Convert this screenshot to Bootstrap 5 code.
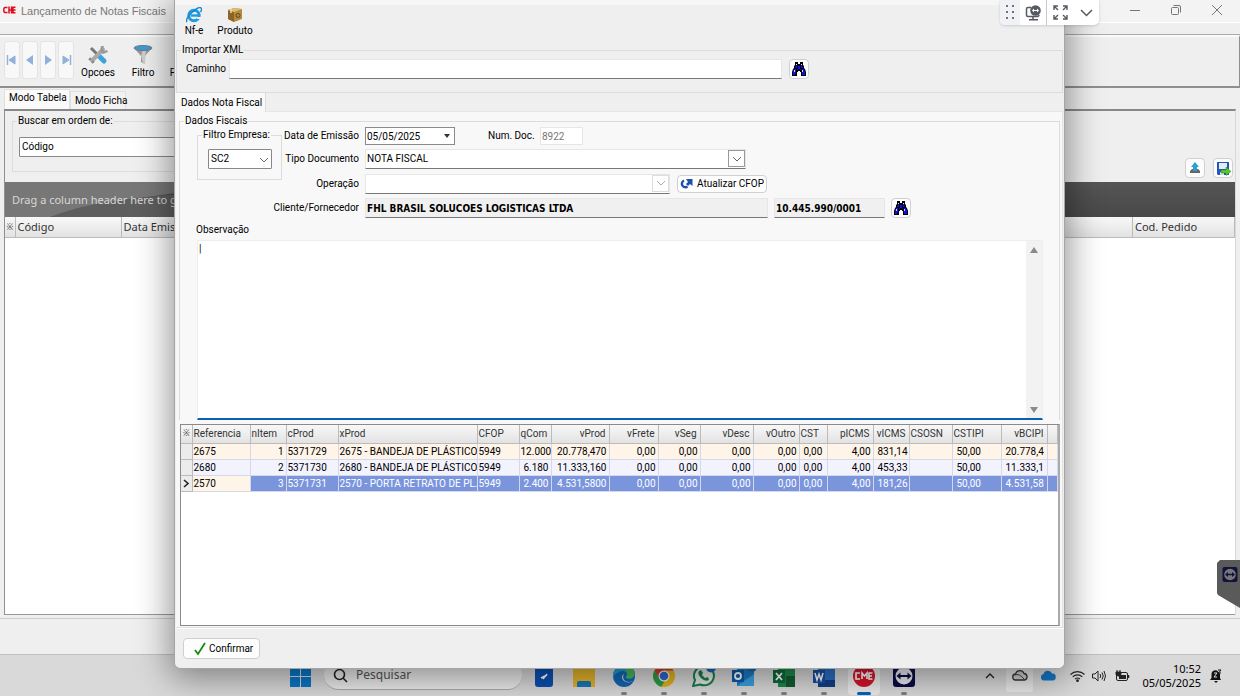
<!DOCTYPE html>
<html lang="pt-BR">
<head>
<meta charset="utf-8">
<meta name="viewport" content="width=device-width, initial-scale=1">
<title>Lançamento de Notas Fiscais</title>
<link href="https://cdn.jsdelivr.net/npm/bootstrap@5.3.0/dist/css/bootstrap.min.css" rel="stylesheet">
<style>
:root{--seg:"Noto Sans","Open Sans",sans-serif;--face:#efefef;--pane:#f8f8f8;--line:#dcdcdc}
body{font:10px/14px Roboto,"Noto Sans",sans-serif;color:#000;height:100vh;overflow:hidden;background:var(--face)}
button,input,select,textarea{font:inherit;color:inherit}
svg{display:block;flex:none}
.desk{height:100%}
/* window behind */
.titlebar{height:22px;background:#f3f3f3;color:#777;font:11px/22px "Liberation Sans",sans-serif}
.menustrip{height:13px;border-bottom:1px solid #aaa;border-top:1px solid #fff}
.toolbar-main{height:53px;border:solid #8f8f8f;border-width:0 1px 2px 0;border-top:2px solid #fafafa;padding:4px 0 0 4px}
.navbtn{width:16px;height:38px;border:1px solid #e4e4e4;border-radius:3px;background:#f8f8f8;padding:0}
.tool{border:0;background:none;padding:0;width:40px;text-align:center;display:flex;flex-direction:column;align-items:center}
.tool svg{margin:4px auto 1px}
.tabrow{height:20px;margin-top:1px}
.tabx{border:1px solid #e0e0e0;border-bottom:0;background:#f2f2f2;padding:1px 4px 0;color:#000}
.tabx.on{background:#fafafa;padding:0 4px 3px}
.panel-main{border-left:1px solid #909090;border-right:1px solid #d8d8d8;border-top:2px solid #888;margin:0 4px;min-height:0}
.grp{border:1px solid var(--line);margin:0;padding:0;min-width:0}
.grp>legend{float:none;width:auto;font:inherit;margin:0 0 0 4px;padding:0 1px;line-height:14px}
.searchzone{height:71px;padding:3px 0 0 7px}
.box{border:1px solid #8a8a8a;background:#fff;height:20px;padding:0 1px;border-radius:0}
.dragband{height:35px;background:linear-gradient(#555,#484848);color:#d8d8d8;font:11px/36px var(--seg);overflow:hidden;padding-left:7px}
.dragband svg{left:0;top:0}
.gridx{width:100%;table-layout:fixed;border-collapse:collapse;margin:0}
.gridx th,.gridx td{overflow:hidden;white-space:nowrap;font-weight:400}
.gridx thead th{background:linear-gradient(#f8f8f8,#e2e2e2);color:#333;border-right:1px solid #bbb;border-bottom:1px solid #bbb}
.back-table th{height:20px;font:11px/18px var(--seg);padding:0 2px}
.gridx th.mark-col{padding:0;text-align:center;font-size:8px}
.status{height:36px;border-top:1px solid #ccc;margin-top:3px}
.mini{width:20px;height:20px;background:#fdfdfd;border:1px solid #d0d0d0;border-radius:4px;padding:0;display:flex;align-items:center;justify-content:center}
/* taskbar */
.taskbar{height:42px;background:#d9d9d9;border-top:1px solid #c0c0c0;font-family:var(--seg)}
.starter{margin-left:290px;margin-right:13px;border:0;background:none;padding:0}
.seek{width:198px;height:29px;border-radius:15px;background:#ececec;border-bottom:1px solid #aaa;padding:0 9px}
.seek input{border:0;background:none;outline:0;width:120px;font-size:12px;color:#555;padding:0}
.seek input::placeholder{color:#555;opacity:1}
.app{width:40px;height:38px;border:0;background:none;padding:0;display:flex;flex-direction:column;align-items:center;justify-content:flex-end;gap:5px}
.app::after{content:"";width:6px;height:3px;border-radius:2px;background:#808080}
.app.idle::after{background:none}
.app.cur{width:32px;margin:0 4px;background:#ececec;border-radius:4px}
.app.cur::after{width:14px;background:#0067c0}
.clock{font-size:11px;line-height:14px}
/* dialog */
.dlg{position:absolute;left:174px;right:175px;top:0;bottom:27px;background:var(--face);border:1px solid #a5a5a5;border-top:0;border-radius:0 0 6px 6px;box-shadow:0 5px 34px 4px rgba(0,0,0,.42);z-index:5;overflow:hidden}
.dlg-top{height:43px;border-top:5px solid #f6f6f6}
.dlg-top .tool svg{margin:2px auto 1px}
.imp{height:50px;margin:0 1px}
.sel{appearance:none;background:#fff;border:1px solid #888;height:20px;padding:0 2px;width:64px;border-radius:1px}
.line{border:1px solid #e6e6e6;border-bottom:1px solid #777;background:#fff;height:20px;padding:0 1px;border-radius:0;min-width:0;outline:0}
.dtabs{height:19px;border-bottom:1px solid #e6e6e6}
.dtabs button{border:0;background:var(--pane);padding:0 6px;height:19px;width:91px;white-space:nowrap;border-right:1px solid #ddd;text-align:left}
.dpane{background:var(--pane);margin:0 1px;border:solid #e2e2e2;border-width:0 1px 1px 0;padding:2px 2px 1px 3px}
.formgrid{display:grid;grid-template-columns:85px 77px minmax(0,1fr);grid-template-rows:22px 24px 25px 24px;align-items:center;margin-left:17px;margin-top:-3px}
.formgrid>label{text-align:right;white-space:nowrap}
.formgrid>.fieldrow{display:flex;align-items:center;padding-left:6px}
.over{position:absolute;right:1px;top:1px;pointer-events:none}
.dd{width:17px;height:17px;border:1px solid #999;display:flex;align-items:center;justify-content:center}
.bold{font:700 10px/14px "DejaVu Sans Condensed","DejaVu Sans",sans-serif;background:#f0f0f0}
.obs{border:1px solid #eee;border-bottom:2px solid #0a5fb4;background:#fff;margin:3px 16px 0 17px;height:180px}
.obs textarea{border:0;resize:none;outline:0;padding:1px 1px;background:none;overflow:hidden}
.sbar{width:16px;background:#f2f2f2;display:flex;flex-direction:column;justify-content:space-between;align-items:center;padding:6px 0 5px}
.tri-u,.tri-d{border:4px solid transparent}
.tri-u{border-bottom:6px solid #8a8a8a;border-top:0}
.tri-d{border-top:6px solid #8a8a8a;border-bottom:0}
.items{background:#fff;border:1px solid #8a8a8a;border-right-width:2px;border-right-color:#aaa;margin:4px 0 0 1px;overflow:hidden}
.items th{height:18px;line-height:14px;padding:1px 3px 1px 1px}
.items td{height:16px;line-height:14px;padding:1px 2px 0 1px;border-right:1px solid #d3d9ea;border-bottom:1px solid #d3d9ea}
.items tbody tr:nth-child(odd){background:#fff4e8}
.items tbody tr:nth-child(even){background:#f3f3fe}
.items tbody tr.pick{background:#7b95dd;color:#fff}
.items tr.pick td:nth-child(2){background:#fff4e8;color:#000}
.items tr td:first-child{background:#ececec;border-color:#bbb;padding:0}
.r{text-align:right}
.foot{height:40px;border-top:1px solid #fff;padding:9px 8px 0}
.okbtn{width:77px;height:21px;border:1px solid #cfcfcf;border-radius:4px;background:#fdfdfd;padding:0 0 0 9px;display:flex;align-items:center;gap:2px}
/* remote session overlays */
.remote{position:absolute;left:1000px;top:0;width:99px;height:25px;background:#fff;border-radius:0 0 5px 5px;z-index:8;display:flex;overflow:hidden;box-shadow:0 1px 3px rgba(0,0,0,.15)}
.remote button{border:0;background:none;padding:0;display:flex;align-items:center;justify-content:center}
.sidehandle{position:absolute;right:0;top:560px;z-index:4}
</style>
</head>
<body>
<svg width="0" height="0" class="position-absolute">
<symbol id="bino" viewBox="0 0 16 16"><path d="M4 1h3v2h2V1h3v3l1 1v2l1 1 1 3v4h-5v-4H9v-1H7v1H6v4H1v-4l1-3 1-1V5l1-1z" fill="#000"/><path d="M5 3h1v4H4l1-2zM3 8h2v3l-1 3H2v-3zM10 3h1v2l1 2h-2zM11 8h2l1 3v3h-3zM7 5h2v3H7z" fill="#1212e8"/><path d="M3 12h1v2H2zM12 12h2v2h-2zM6 8h1v1H6zM9 8h1v1H9z" fill="#1212e8"/><path d="M3 9h1v2H3zM11 9h1v2h-1zM5 3h1v1H5zM10 3h1v1h-1z" fill="#dde"/></symbol>
<symbol id="chev" viewBox="0 0 10 6"><path d="M1 1l4 4 4-4" fill="none" stroke="currentColor"/></symbol>
</svg>
<div class="desk d-flex flex-column position-relative">
  <main class="flex-grow-1 d-flex flex-column" style="min-height:0">
    <header class="titlebar d-flex align-items-center">
      <svg width="13" height="8" viewBox="0 0 13 8" style="margin:0 5px 2px 3px"><path d="M4.500 1.500H2Q.8 1.500 .8 4T2 6.500h2.500M6 7.500V.5M8.500 7.500V.5M6 4h2.500M12.500 1.200H10v5.600h2.500M10 4h2.500" fill="none" stroke="#e00d1c" stroke-width="1.500"/></svg>
      <span>Lançamento de Notas Fiscais</span>
      <div class="ms-auto d-flex align-items-center" style="gap:31px;padding:0 18px 3px 0">
        <svg width="10" height="10"><path d="M0 5.500h10" stroke="#777"/></svg>
        <svg width="10" height="10" viewBox="0 0 10 10" fill="none" stroke="#777"><rect x=".5" y="2.500" width="7" height="7" rx="1"/><path d="M2.500 .5h5.500a1.500 1.500 0 0 1 1.500 1.500v5.500"/></svg>
        <svg width="10" height="10"><path d="M0 0l10 10M10 0L0 10" stroke="#777"/></svg>
      </div>
    </header>
    <div class="menustrip"></div>
    <div class="toolbar-main d-flex">
      <div class="d-flex" style="gap:2px">
        <button class="navbtn" aria-label="Primeiro"><svg width="14" height="12"><path d="M2.500 1v10" stroke="#8fb1dc" stroke-width="1.500"/><path d="M4 6l6-4v8z" fill="#8fb1dc" stroke="#8fb1dc"/></svg></button>
        <button class="navbtn" aria-label="Anterior"><svg width="14" height="12"><path d="M3 6l7-5v10z" fill="#8fb1dc"/></svg></button>
        <button class="navbtn" aria-label="Próximo"><svg width="14" height="12"><path d="M11 6L4 1v10z" fill="#8fb1dc"/></svg></button>
        <button class="navbtn" aria-label="Último"><svg width="14" height="12"><path d="M11.500 1v10" stroke="#8fb1dc" stroke-width="1.500"/><path d="M10 6L4 2v8z" fill="#8fb1dc" stroke="#8fb1dc"/></svg></button>
      </div>
      <button class="tool ms-1"><svg width="20" height="20" viewBox="0 0 20 20"><path d="M3 3l8 8" stroke="#777" stroke-width="3"/><path d="M11 11l5 5" stroke="#39a3dc" stroke-width="5" stroke-linecap="round"/><path d="M15 4.500L4 15.500" stroke="#a9a9a9" stroke-width="4" stroke-linecap="round"/><path d="M13 1l-1 5 3 3 5-2-1-2-3 1-1-2 1-3z" fill="#999"/><path d="M1 15l2-2M4 18l2-2" stroke="#888" stroke-width="2"/></svg>Opcoes</button>
      <button class="tool" style="margin-left:5px"><svg width="20" height="20" viewBox="0 0 20 20"><path d="M1 3l7 8v6l4 2v-8l7-8z" fill="#999"/><path d="M8 11l2-7h3l-1 15-2-1z" fill="#ccc"/><ellipse cx="10" cy="3" rx="9" ry="2.500" fill="#3c9cd6" stroke="#777"/></svg>Filtro</button>
      <button class="tool" style="margin-left:2px"><svg width="20" height="20"></svg>Fechar</button>
    </div>
    <div class="tabrow d-flex align-items-end ps-1" role="tablist">
      <button class="tabx on h-100 text-start text-nowrap" style="width:66px" role="tab">Modo Tabela</button>
      <button class="tabx text-start text-nowrap" style="height:18px;width:56px" role="tab">Modo Ficha</button>
    </div>
    <section class="panel-main flex-grow-1 d-flex flex-column">
      <div class="searchzone d-flex justify-content-between">
        <fieldset class="grp" style="width:420px;height:58px"><legend>Buscar em ordem de:</legend>
          <select class="sel d-block" style="width:300px;margin:9px 0 0 6px" aria-label="Buscar em ordem de"><option>Código</option></select></fieldset>
        <div class="d-flex align-items-end" style="gap:8px;padding:0 2px 4px 0">
          <button class="mini" aria-label="Importar"><svg width="12" height="12" viewBox="0 0 12 12"><path d="M1 9l2-2h6l2 2v2H1z" fill="#666"/><path d="M6 0L2 5h2v4h4V5h2z" fill="#2aa0d4"/></svg></button>
          <button class="mini" aria-label="Salvar"><svg width="15" height="15" viewBox="0 0 15 15"><path d="M1 1h12v13H2l-1-1z" fill="#2458b8"/><path d="M3 2h8v6H3z" fill="#e4ecf6"/><path d="M4 11h4v3H4z" fill="#dde"/><path d="M5 9h5V6l5 4.500-5 4V12H5z" fill="#58c832" stroke="#2b8a14" stroke-width=".5"/></svg></button>
        </div>
      </div>
      <div class="dragband position-relative"><svg class="position-absolute" width="300" height="35"><path d="M0 0h300C200 4 110 18 45 35H0z" fill="#777"/><path d="M45 35C90 18 130 13 300 5v30z" fill="#5e5e5e"/></svg><span class="position-relative">Drag a column header here to group by that column</span></div>
      <div class="flex-grow-1 bg-white" style="border-bottom:1px solid #999">
        <table class="gridx back-table"><colgroup><col style="width:10px"><col style="width:106px"><col><col style="width:102px"></colgroup><thead><tr><th class="mark-col">※</th><th>Código</th><th>Data Emissão</th><th>Cod. Pedido</th></tr></thead></table>
      </div>
    </section>
    <div class="status"></div>
  </main>

  <footer class="taskbar d-flex align-items-center">
    <button class="starter" aria-label="Iniciar"><svg width="21" height="22"><path d="M0 0h10v11H0zM11 0h10v11H11zM0 12h10v10H0zM11 12h10v10H11z" fill="#0a78c8"/></svg></button>
    <label class="seek d-flex align-items-center gap-2"><svg width="15" height="15" viewBox="0 0 15 15" fill="none" stroke="#222" stroke-width="1.600"><circle cx="6.500" cy="6.500" r="5"/><path d="M10 10l4 4"/></svg><input type="text" placeholder="Pesquisar" aria-label="Pesquisar"></label>
    <nav class="d-flex" style="margin-left:2px">
      <button class="app idle" aria-label="Assistente"><svg width="18" height="20"><rect width="18" height="20" rx="3" fill="#0b50b4"/><path d="M6 11l6-3M8 12l4-5" stroke="#fff" stroke-width="1.500"/></svg></button>
      <button class="app idle" aria-label="Arquivos"><svg width="22" height="20"><path d="M0 0h22v20H0z" fill="#e5b32c"/><path d="M4 20v-4q0-2 2-2h10q2 0 2 2v4z" fill="#1777b8"/></svg></button>
      <button class="app" aria-label="Edge"><svg width="22" height="22" viewBox="0 0 22 22"><circle cx="11" cy="11" r="11" fill="#1268b5"/><path d="M0 10C2-3 20-3 22 8c0 6-7 7-9 4 3-4-2-8-7-5Q1 9 0 13z" fill="#1c9fc9"/><path d="M12 0c8 0 11 7 9 11-3 4-8 3-8 1 3-3 1-9-6-9z" fill="#4cb75a"/><path d="M11 9c-3 5 2 10 9 7-4 3-11 1-11-4q0-2 2-3z" fill="#d0d9df"/></svg></button>
      <button class="app" aria-label="Chrome"><svg width="22" height="22" viewBox="0 0 22 22"><circle cx="11" cy="11" r="11" fill="#e2b21b"/><path d="M1.500 5.500A11 11 0 0 1 20.500 5.500H11L6 14z" fill="#d43a2c"/><path d="M1.500 5.500L6.500 14l5 2-3 5.700A11 11 0 0 1 1.500 5.500z" fill="#2a9c4a"/><circle cx="11" cy="11" r="5.500" fill="#eee"/><circle cx="11" cy="11" r="4.300" fill="#2b66c8"/></svg></button>
      <button class="app" aria-label="WhatsApp"><svg width="24" height="22" viewBox="0 0 24 22"><path d="M1 21l2-6A10 9.500 0 1 1 8 19.500z" fill="#dfe6e1" stroke="#1a7d4d" stroke-width="2"/><path d="M7 6q-2 3 2 7t8 2l-1-3-3 1-3-3 1-2-2-3z" fill="#1a7d4d"/><circle cx="19" cy="2.500" r="5" fill="#1768b4"/></svg></button>
      <button class="app" aria-label="Outlook"><svg width="24" height="22" viewBox="0 0 24 22"><path d="M5 2h17v19H5z" fill="#1b7ac8"/><path d="M5 21l17-12v12z" fill="#3aa2e0"/><rect y="5" width="12" height="12" fill="#0a5aa8"/><circle cx="6" cy="11" r="3" fill="none" stroke="#fff" stroke-width="1.800"/><circle cx="20" cy="2" r="5" fill="#1768b4"/></svg></button>
      <button class="app" aria-label="Excel"><svg width="22" height="21"><path d="M5 0h17v21H5z" fill="#1d8a4b"/><path d="M13 10h9v11h-9z" fill="#125c33"/><rect y="4" width="12" height="13" fill="#0d6a39"/><path d="M3 7l6 7M9 7l-6 7" stroke="#fff" stroke-width="1.800"/></svg></button>
      <button class="app" aria-label="Word"><svg width="22" height="21"><path d="M5 0h17v21H5z" fill="#2a6fc4"/><path d="M5 14h17v7H5z" fill="#133f8a"/><rect y="4" width="12" height="13" fill="#174fa4"/><path d="M2 7l2 7 2-6 2 6 2-7" fill="none" stroke="#fff" stroke-width="1.500"/></svg></button>
      <button class="app cur" aria-label="CME"><svg width="22" height="22" viewBox="0 0 22 22"><circle cx="11" cy="11" r="11" fill="#d6152a"/><path d="M7 8H3v6h4M9 14V8l2.500 3L14 8v6M19.500 8H16v6h3.500M16 11h3" fill="none" stroke="#fff" stroke-width="1.600"/></svg></button>
      <button class="app" aria-label="TeamViewer"><svg width="22" height="22" viewBox="0 0 22 22"><rect width="22" height="22" rx="3" fill="#0b0b48"/><circle cx="11" cy="11" r="8.500" fill="#e9e9ef"/><path d="M3.500 11l4-3.500V10h7V7.500l4 3.500-4 3.500V12h-7v2.500z" fill="#0b0b48"/></svg></button>
    </nav>
    <div class="ms-auto d-flex align-items-center" style="padding-right:18px">
      <svg width="10" height="6" viewBox="0 0 10 6" fill="none" stroke="#222" stroke-width="1.400"><path d="M1 5l4-4 4 4"/></svg>
      <span class="d-flex align-items-center justify-content-center" style="width:27px;height:32px;background:#e8e8e8;border-radius:3px;margin-left:11px"><svg width="16" height="11" viewBox="0 0 16 11"><path d="M4 10a3 3 0 0 1-.5-6 4.500 4.500 0 0 1 8.500-.5A3.300 3.300 0 0 1 12.500 10z" fill="#ccc" stroke="#333" stroke-width="1.300"/><path d="M3 5q4-2 9 4" stroke="#444" fill="none"/></svg></span>
      <svg width="16" height="11" viewBox="0 0 16 11" style="margin-left:7px"><path d="M4 10.500a3.300 3.300 0 0 1-.5-6.500 4.500 4.500 0 0 1 8.500-.5A3.500 3.500 0 0 1 12.500 10.500z" fill="#1478c8"/></svg>
      <svg width="15" height="12" viewBox="0 0 15 12" fill="none" stroke="#222" stroke-width="1.100" style="margin-left:14px"><path d="M.5 4.500a10 10 0 0 1 14 0M2.700 6.800a7 7 0 0 1 9.600 0M5 9a4 4 0 0 1 5 0"/><circle cx="7.500" cy="10.700" r=".8" fill="#222"/></svg>
      <svg width="14" height="12" viewBox="0 0 14 12" fill="none" stroke="#222" style="margin-left:7px"><path d="M.5 4h2.500l3-3v10L3 8H.5zM8 4q1.500 2 0 4M10 2.500q2.500 3.500 0 7M12 1q3 5 0 10"/></svg>
      <svg width="16" height="12" viewBox="0 0 16 12" style="margin-left:8px"><rect x="2.500" y="2.500" width="11" height="8" rx="1.500" fill="none" stroke="#222"/><rect x="5" y="5" width="7" height="4" fill="#222"/><path d="M14.500 5v3" stroke="#222" stroke-width="1.500"/><path d="M3 0v2M6 0v2M2 2h5v2q0 2-2.500 2T2 4z" fill="#222" stroke="#222"/></svg>
      <time class="clock text-end" style="margin-left:12px">10:52<br>05/05/2025</time>
      <svg width="13" height="14" viewBox="0 0 13 14" style="margin-left:8px"><path d="M1 11l1.500-2V5A4 4 0 0 1 8 1.500L11 5v4l1 2zM5 12h4l-2 2z" fill="#111"/><path d="M5 4h3L5 8h3" stroke="#ddd" fill="none"/><path d="M9 1h3L9.500 4H12" stroke="#111" fill="none"/></svg>
    </div>
  </footer>

  <section class="dlg d-flex flex-column" role="dialog" aria-label="Dados da nota fiscal">
    <div class="dlg-top d-flex">
      <button class="tool" style="width:38px"><svg width="16" height="16" viewBox="0 0 16 16"><ellipse cx="8" cy="8.500" rx="5.200" ry="5.200" fill="none" stroke="#1e9be0" stroke-width="3"/><path d="M5 8.500h9" stroke="#1e9be0" stroke-width="2.400"/><path d="M11 10h5v2h-5z" fill="#efefef"/><path d="M1 15Q-1 12 6 5.500T15 1q1.500 1-.5 4" fill="none" stroke="#1787d0" stroke-width="1.400"/></svg>Nf-e</button>
      <button class="tool" style="width:42px;margin-left:1px"><svg width="16" height="16" viewBox="0 0 16 16"><path d="M1 3l6-2 8 1v10l-8 3-6-3z" fill="#b58a3c"/><path d="M1 3l6 2v10l-6-3z" fill="#8b6526"/><path d="M1 3l6-2 8 1-8 3z" fill="#dcbc74"/><path d="M4 2v4" stroke="#eddca8" stroke-width="1.500"/><circle cx="11" cy="8.500" r="2" fill="none" stroke="#5e4418"/></svg>Produto</button>
    </div>
    <fieldset class="grp imp"><legend>Importar XML</legend>
      <div class="d-flex align-items-center" style="padding:2px 0 0 9px">
        <label for="cam" style="width:43px">Caminho</label><input id="cam" class="line" type="text" style="width:553px"><button class="mini" style="margin-left:7px" aria-label="Procurar XML"><svg width="16" height="16"><use href="#bino"/></svg></button>
      </div>
    </fieldset>
    <div class="dtabs" role="tablist"><button role="tab">Dados Nota Fiscal</button></div>
    <div class="dpane flex-grow-1 d-flex flex-column">
      <fieldset class="grp" style="border-bottom:0"><legend>Dados Fiscais</legend>
        <div class="formgrid">
          <fieldset class="grp align-self-start" style="grid-column:1;grid-row:1 / 4;height:52px;margin-top:3px"><legend class="text-nowrap">Filtro Empresa:</legend>
            <div class="position-relative" style="margin:7px 0 0 10px;width:64px"><select class="sel d-block" aria-label="Filtro Empresa"><option>SC2</option></select><svg class="over" width="10" height="6" style="right:3px;top:8px;color:#666"><use href="#chev"/></svg></div></fieldset>
          <label for="dt" style="grid-column:2">Data de Emissão</label>
          <div class="fieldrow"><div class="position-relative"><input id="dt" class="box" type="text" value="05/05/2025" style="width:90px;height:18px"><svg class="over" width="8" height="4" style="right:4px;top:7px"><path d="M1 0h6L4 4z" fill="#333"/></svg></div><label for="nd" class="text-nowrap" style="margin-left:33px;width:52px">Num. Doc.</label><input id="nd" class="line" type="text" value="8922" style="width:43px;height:18px;color:#777;border-bottom-color:#e6e6e6"></div>
          <label for="td" style="grid-column:2">Tipo Documento</label>
          <div class="fieldrow"><div class="position-relative"><select id="td" class="sel line" style="width:381px"><option>NOTA FISCAL</option></select><span class="over dd"><svg width="10" height="6" style="color:#666"><use href="#chev"/></svg></span></div></div>
          <label for="op" style="grid-column:2">Operação</label>
          <div class="fieldrow"><div class="position-relative"><select id="op" class="sel line" style="width:305px"><option></option></select><span class="over dd" style="border-color:#ddd"><svg width="10" height="6" style="color:#aaa"><use href="#chev"/></svg></span></div>
            <button class="mini text-nowrap" style="width:90px;height:18px;margin-left:7px;gap:4px"><svg width="13" height="11" viewBox="0 0 13 11"><path d="M7.500 8.500A3.500 3.500 0 1 1 4 2.500" fill="none" stroke="#1b4fb0" stroke-width="2.400"/><path d="M6 1h6.500v7L10 6 8 8 6 6l2-2z" fill="#1b4fb0"/></svg>Atualizar CFOP</button></div>
          <label for="cf" style="grid-column:1 / 3;grid-row:4">Cliente/Fornecedor</label>
          <div class="fieldrow" style="gap:6px"><input id="cf" class="line bold" type="text" value="FHL BRASIL SOLUCOES LOGISTICAS LTDA" style="width:403px"><input class="line bold" type="text" value="10.445.990/0001" aria-label="CNPJ" style="width:111px"><button class="mini" aria-label="Procurar cliente"><svg width="16" height="16"><use href="#bino"/></svg></button></div>
        </div>
        <label for="ob" class="d-block" style="margin:3px 0 0 16px">Observação</label>
        <div class="obs d-flex"><textarea id="ob" class="flex-grow-1">|</textarea><div class="sbar"><span class="tri-u"></span><span class="tri-d"></span></div></div>
      </fieldset>
      <div class="items flex-grow-1">
        <table class="gridx">
          <colgroup><col style="width:11px"><col style="width:58px"><col style="width:36px"><col style="width:52px"><col style="width:139px"><col style="width:42px"><col style="width:32px"><col style="width:58px"><col style="width:49px"><col style="width:42px"><col style="width:53px"><col style="width:46px"><col style="width:28px"><col style="width:46px"><col style="width:36px"><col style="width:43px"><col style="width:49px"><col style="width:46px"><col></colgroup>
          <thead><tr><th class="mark-col">※</th><th>Referencia</th><th>nItem</th><th>cProd</th><th>xProd</th><th>CFOP</th><th>qCom</th><th class="r">vProd</th><th class="r">vFrete</th><th class="r">vSeg</th><th class="r">vDesc</th><th class="r">vOutro</th><th>CST</th><th class="r">pICMS</th><th class="r">vICMS</th><th>CSOSN</th><th>CSTIPI</th><th class="r">vBCIPI</th><th></th></tr></thead>
          <tbody>
          <tr><td></td><td>2675</td><td class="r">1</td><td>5371729</td><td class="pe-0">2675 - BANDEJA DE PLÁSTICO</td><td>5949</td><td class="pe-0">12.000</td><td class="r">20.778,470</td><td class="r">0,00</td><td class="r">0,00</td><td class="r">0,00</td><td class="r">0,00</td><td class="ps-1">0,00</td><td class="r">4,00</td><td class="ps-1">831,14</td><td></td><td class="ps-1">50,00</td><td class="ps-1">20.778,4</td><td></td></tr>
          <tr><td></td><td>2680</td><td class="r">2</td><td>5371730</td><td class="pe-0">2680 - BANDEJA DE PLÁSTICO</td><td>5949</td><td class="r">6.180</td><td class="r">11.333,160</td><td class="r">0,00</td><td class="r">0,00</td><td class="r">0,00</td><td class="r">0,00</td><td class="ps-1">0,00</td><td class="r">4,00</td><td class="ps-1">453,33</td><td></td><td class="ps-1">50,00</td><td class="ps-1">11.333,1</td><td></td></tr>
          <tr class="pick"><td><svg width="9" height="9"><path d="M3 1l4 3.500L3 8" fill="none" stroke="#222" stroke-width="1.600"/></svg></td><td>2570</td><td class="r">3</td><td>5371731</td><td class="pe-0">2570 - PORTA RETRATO DE PL.</td><td>5949</td><td class="r">2.400</td><td class="r">4.531,5800</td><td class="r">0,00</td><td class="r">0,00</td><td class="r">0,00</td><td class="r">0,00</td><td class="ps-1">0,00</td><td class="r">4,00</td><td class="ps-1">181,26</td><td></td><td class="ps-1">50,00</td><td class="ps-1">4.531,58</td><td></td></tr>
          </tbody>
        </table>
      </div>
    </div>
    <div class="foot"><button class="okbtn"><svg width="14" height="14" viewBox="0 0 14 14"><path d="M2 8l3 4L12 1" fill="none" stroke="#138a13" stroke-width="1.800"/></svg>Confirmar</button></div>
  </section>

  <div class="remote" role="toolbar" aria-label="Sessão remota">
    <button style="width:20px;background:#f1f2f6" aria-label="Mover"><svg width="9" height="15" fill="#70737a"><path d="M0 0h2v2H0zM6 0h2v2H6zM0 6h2v2H0zM6 6h2v2H6zM0 12h2v2H0zM6 12h2v2H6z"/></svg></button>
    <button style="width:27px;border-right:1px solid #c5c8cc" aria-label="Conexão"><svg width="17" height="16" viewBox="0 0 17 16"><path d="M6 2.500H3a1.500 1.500 0 0 0-1.500 1.500v6A1.500 1.500 0 0 0 3 11.500h9.500a1.500 1.500 0 0 0 1.500-1.500M8 12v2.500M4 14.800h9" fill="none" stroke="#555a60" stroke-width="1.500"/><circle cx="10.500" cy="5.500" r="5.300" fill="#555a60"/><path d="M7 5.500l2-2v1.500h3V3.500l2 2-2 2V6H9v1.500z" fill="#fff"/></svg></button>
    <button style="width:26px" aria-label="Tela cheia"><svg width="15" height="15" fill="none" stroke="#555a60" stroke-width="1.400"><path d="M1 5V1h4M1 1l4 4M10 1h4v4M14 1l-4 4M1 10v4h4M1 14l4-4M14 10v4h-4M14 14l-4-4"/></svg></button>
    <button class="flex-grow-1" aria-label="Mais"><svg width="13" height="8" fill="none" stroke="#555a60" stroke-width="1.500"><path d="M1 1l5.500 5.500L12 1"/></svg></button>
  </div>
  <button class="sidehandle border-0 p-0 bg-transparent" aria-label="Painel TeamViewer"><svg width="23" height="48" viewBox="0 0 23 48"><path d="M3 0h20v48L1 35 0 33V3z" fill="#5a5a5a"/><rect x="5.500" y="7" width="15" height="15" rx="2" fill="#12123f"/><circle cx="13" cy="14.500" r="5.800" fill="#777"/><path d="M8 14.500l3-2.500v1.700h4V12l3 2.500-3 2.500v-1.700h-4V17z" fill="#12123f"/></svg></button>
</div>
<script src="https://cdn.jsdelivr.net/npm/bootstrap@5.3.0/dist/js/bootstrap.bundle.min.js"></script>
</body>
</html>
